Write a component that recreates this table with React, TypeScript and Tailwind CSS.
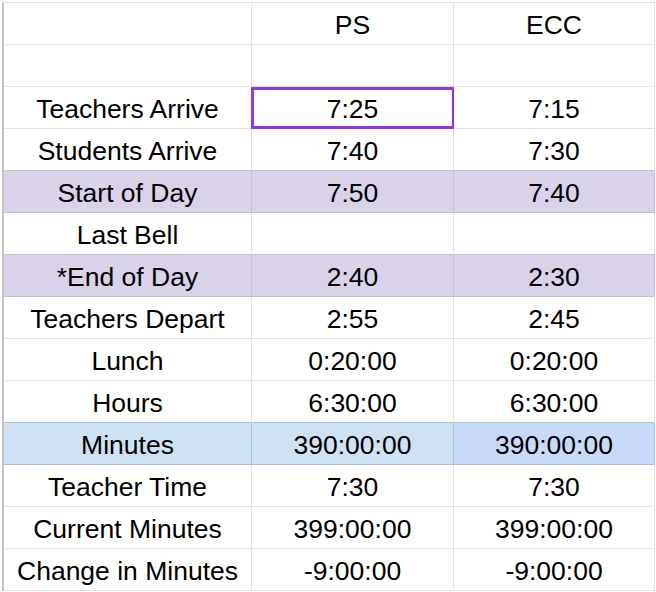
import React from 'react';

type Fill = 'none' | 'lavender' | 'blue';

interface Row {
  label: string;
  ps: string;
  ecc: string;
  fill: Fill;
}

const rows: Row[] = [
  { label: '', ps: 'PS', ecc: 'ECC', fill: 'none' },
  { label: '', ps: '', ecc: '', fill: 'none' },
  { label: 'Teachers Arrive', ps: '7:25', ecc: '7:15', fill: 'none' },
  { label: 'Students Arrive', ps: '7:40', ecc: '7:30', fill: 'none' },
  { label: 'Start of Day', ps: '7:50', ecc: '7:40', fill: 'lavender' },
  { label: 'Last Bell', ps: '', ecc: '', fill: 'none' },
  { label: '*End of Day', ps: '2:40', ecc: '2:30', fill: 'lavender' },
  { label: 'Teachers Depart', ps: '2:55', ecc: '2:45', fill: 'none' },
  { label: 'Lunch', ps: '0:20:00', ecc: '0:20:00', fill: 'none' },
  { label: 'Hours', ps: '6:30:00', ecc: '6:30:00', fill: 'none' },
  { label: 'Minutes', ps: '390:00:00', ecc: '390:00:00', fill: 'blue' },
  { label: 'Teacher Time', ps: '7:30', ecc: '7:30', fill: 'none' },
  { label: 'Current Minutes', ps: '399:00:00', ecc: '399:00:00', fill: 'none' },
  { label: 'Change in Minutes', ps: '-9:00:00', ecc: '-9:00:00', fill: 'none' },
];

// gridline colour darkens over filled cells, like Sheets does
function lineFor(fill: Fill) {
  if (fill === 'lavender') return 'bg-[#c6bed9]';
  if (fill === 'blue') return 'bg-[#a9c2dc]';
  return 'bg-[#e2e2e2]';
}

function Cell({
  text,
  bg,
  right,
  bottom,
  selected,
}: {
  text: string;
  bg: string;
  right: string;
  bottom: string;
  selected?: boolean;
}) {
  return (
    <div className={`relative h-[42px] flex ${bg}`}>
      <div className="flex-1 flex flex-col min-h-0">
        <div className="flex-1 min-h-0 flex items-center justify-center pt-[3px] leading-[30px]">{text}</div>
        <div className={`h-px shrink-0 ${bottom}`} />
      </div>
      <div className={`w-px shrink-0 ${right}`} />
      {selected && (
        <div className="absolute -left-px -right-px top-0 bottom-0 border-[3px] border-[#9334e6]" />
      )}
    </div>
  );
}

export default function App() {
  return (
    <div className="w-[656px] h-[592px] bg-white pt-[2px] pl-[2px] overflow-hidden">
      <div
        className="border-l-2 border-[#c4c4c4] border-t border-t-[#e2e2e2] w-[653px] text-[26.5px] text-black"
        style={{ fontFamily: '"Liberation Sans", Arial, sans-serif' }}
      >
        <div className="grid grid-cols-[248px_202px_201px]">
          {rows.map((row, i) => {
            const next = rows[i + 1];
            const tint = row.fill !== 'none' ? row.fill : next && next.fill !== 'none' ? next.fill : 'none';
            const bottom = lineFor(tint);
            const right = lineFor(row.fill);
            const base =
              row.fill === 'lavender' ? 'bg-[#d9d2e9]' : row.fill === 'blue' ? 'bg-[#cfe2f3]' : 'bg-white';
            const last = row.fill === 'blue' ? 'bg-[#c9daf8]' : base;
            return (
              <React.Fragment key={i}>
                <Cell text={row.label} bg={base} right={right} bottom={bottom} />
                <Cell text={row.ps} bg={base} right={right} bottom={bottom} selected={i === 2} />
                <Cell text={row.ecc} bg={last} right={right} bottom={bottom} />
              </React.Fragment>
            );
          })}
        </div>
      </div>
    </div>
  );
}
